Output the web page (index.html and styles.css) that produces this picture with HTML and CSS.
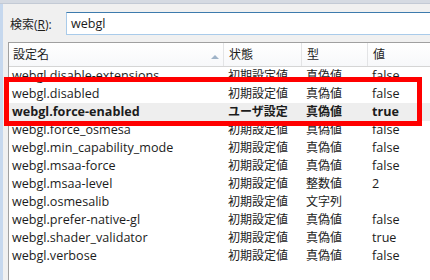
FILE: index.html
```html
<!DOCTYPE html>
<html lang="ja">
<head>
<meta charset="utf-8">
<link rel="stylesheet" href="styles.css">
</head>
<body>
<div class="frame">
  <div class="edge"></div>
  <div class="main">
    <div class="topbar"></div>
    <div class="search">
      <label class="search-label">検索(<u>R</u>):</label>
      <div class="search-input">webgl</div>
    </div>
    <div class="table">
      <div class="row head">
        <div class="cell name">設定名<span class="sort"></span></div>
        <div class="cell">状態</div>
        <div class="cell">型</div>
        <div class="cell">値</div>
      </div>
      <div class="row"><div class="cell name">webgl.disable-extensions</div><div class="cell">初期設定値</div><div class="cell">真偽値</div><div class="cell val">false</div></div>
      <div class="row"><div class="cell name">webgl.disabled</div><div class="cell">初期設定値</div><div class="cell">真偽値</div><div class="cell val">false</div></div>
      <div class="row sel"><div class="cell name">webgl.force-enabled</div><div class="cell">ユーザ設定</div><div class="cell">真偽値</div><div class="cell val">true</div></div>
      <div class="row"><div class="cell name">webgl.force_osmesa</div><div class="cell">初期設定値</div><div class="cell">真偽値</div><div class="cell val">false</div></div>
      <div class="row"><div class="cell name">webgl.min_capability_mode</div><div class="cell">初期設定値</div><div class="cell">真偽値</div><div class="cell val">false</div></div>
      <div class="row"><div class="cell name">webgl.msaa-force</div><div class="cell">初期設定値</div><div class="cell">真偽値</div><div class="cell val">false</div></div>
      <div class="row"><div class="cell name">webgl.msaa-level</div><div class="cell">初期設定値</div><div class="cell">整数値</div><div class="cell val">2</div></div>
      <div class="row"><div class="cell name">webgl.osmesalib</div><div class="cell">初期設定値</div><div class="cell">文字列</div><div class="cell val"></div></div>
      <div class="row"><div class="cell name">webgl.prefer-native-gl</div><div class="cell">初期設定値</div><div class="cell">真偽値</div><div class="cell val">false</div></div>
      <div class="row"><div class="cell name">webgl.shader_validator</div><div class="cell">初期設定値</div><div class="cell">真偽値</div><div class="cell val">true</div></div>
      <div class="row"><div class="cell name">webgl.verbose</div><div class="cell">初期設定値</div><div class="cell">真偽値</div><div class="cell val">false</div></div>
    </div>
  </div>
  <div class="highlight"></div>
</div>
</body>
</html>
```
FILE: styles.css
```css
* { box-sizing: border-box; }
html, body { margin: 0; padding: 0; }
body {
  width: 430px;
  height: 280px;
  overflow: hidden;
  background: #f0f0f0;
  font-family: "Open Sans", "Noto Sans CJK JP", sans-serif;
  font-size: 12px;
  color: #1c1c1c;
}
.frame {
  position: relative;
  display: flex;
  height: 280px;
}
.edge {
  width: 3px;
  flex: none;
  margin-top: 4px;
  background: #c6d8ee;
}
.main {
  flex: 1;
  display: flex;
  flex-direction: column;
  margin-left: -3px;
}
.topbar {
  height: 4px;
  background: #d5dae2;
  border-bottom: 1px solid #c3cad5;
}
.search {
  display: flex;
  align-items: center;
  height: 38px;
  padding-left: 10px;
  padding-top: 1px;
}
.search-label {
  width: 56px;
  flex: none;
}
.search-label u { text-decoration: underline; }
.search-input {
  flex: 1;
  height: 23px;
  background: #fff;
  border: 1px solid #a9cbea;
  border-top-color: #3d7bad;
  border-right: none;
  padding-left: 4px;
  line-height: 21px;
  font-size: 12.6px;
}
.table {
  margin-left: 8px;
  flex: 1;
  background: #fff;
  border-top: 1px solid #a0a0a0;
  border-left: 1px solid #a0a0a0;
}
.row {
  display: grid;
  grid-template-columns: 215px 78px 66px 1fr;
  height: 18px;
  line-height: 18px;
}
.cell {
  padding-left: 4px;
  white-space: nowrap;
  overflow: hidden;
}
.cell.name { padding-left: 3px; }
.cell.name, .cell.val { font-size: 12.6px; }
.row.head {
  height: 24px;
  line-height: 23px;
  background: linear-gradient(#ffffff, #f7f8fa);
  border-bottom: 1px solid #d5d5d5;
}
.row.head .cell {
  padding-left: 5px;
  border-right: 1px solid #e3e4e6;
  position: relative;
  font-size: 12px;
}
.row.head .cell.name { padding-left: 4px; }
.row.head .cell:last-child { border-right: none; }
.sort {
  position: absolute;
  right: 4px;
  top: 12px;
  width: 0;
  height: 0;
  border-left: 4px solid transparent;
  border-right: 4px solid transparent;
  border-bottom: 4px solid #9fb3c8;
}
.row.sel {
  background: #eeeeee;
  font-weight: bold;
}
.highlight {
  position: absolute;
  left: 4px;
  top: 77px;
  width: 418px;
  height: 49px;
  border: 5px solid #ff0000;
}
```
